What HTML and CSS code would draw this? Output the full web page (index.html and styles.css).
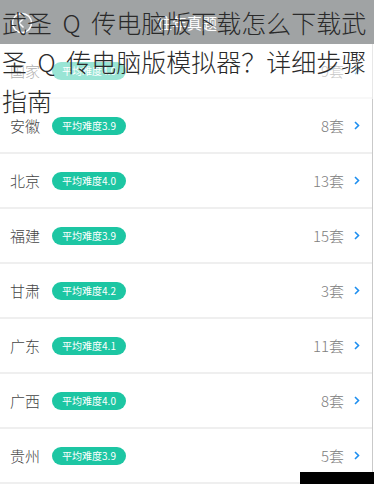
FILE: index.html
```html
<!DOCTYPE html>
<html lang="zh-CN">
<head>
<meta charset="utf-8">
<title>往年真题</title>
<link rel="stylesheet" href="styles.css">
</head>
<body>
<div class="app">
  <header class="topbar">
    <span class="back">
      <svg width="22" height="22" viewBox="0 0 22 22"><circle cx="11" cy="11" r="9.5" fill="none" stroke="#fff" stroke-width="1.5"/><path d="M12.5 6.5 L8 11 L12.5 15.5" fill="none" stroke="#fff" stroke-width="1.5"/></svg>
    </span>
    <span class="title">往年真题</span>
    <span></span>
  </header>
  <ul class="list">
    <li class="row"><span class="name">国家</span><span class="badge">平均难度4.0</span><span class="count">9套</span><svg class="chev" width="6" height="9" viewBox="0 0 6 9"><path d="M1 1 L4.5 4.5 L1 8" fill="none" stroke="#1e8ff0" stroke-width="1.6"/></svg></li>
    <li class="row"><span class="name">安徽</span><span class="badge">平均难度3.9</span><span class="count">8套</span><svg class="chev" width="6" height="9" viewBox="0 0 6 9"><path d="M1 1 L4.5 4.5 L1 8" fill="none" stroke="#1e8ff0" stroke-width="1.6"/></svg></li>
    <li class="row"><span class="name">北京</span><span class="badge">平均难度4.0</span><span class="count">13套</span><svg class="chev" width="6" height="9" viewBox="0 0 6 9"><path d="M1 1 L4.5 4.5 L1 8" fill="none" stroke="#1e8ff0" stroke-width="1.6"/></svg></li>
    <li class="row"><span class="name">福建</span><span class="badge">平均难度3.9</span><span class="count">15套</span><svg class="chev" width="6" height="9" viewBox="0 0 6 9"><path d="M1 1 L4.5 4.5 L1 8" fill="none" stroke="#1e8ff0" stroke-width="1.6"/></svg></li>
    <li class="row"><span class="name">甘肃</span><span class="badge">平均难度4.2</span><span class="count">3套</span><svg class="chev" width="6" height="9" viewBox="0 0 6 9"><path d="M1 1 L4.5 4.5 L1 8" fill="none" stroke="#1e8ff0" stroke-width="1.6"/></svg></li>
    <li class="row"><span class="name">广东</span><span class="badge">平均难度4.1</span><span class="count">11套</span><svg class="chev" width="6" height="9" viewBox="0 0 6 9"><path d="M1 1 L4.5 4.5 L1 8" fill="none" stroke="#1e8ff0" stroke-width="1.6"/></svg></li>
    <li class="row"><span class="name">广西</span><span class="badge">平均难度4.0</span><span class="count">8套</span><svg class="chev" width="6" height="9" viewBox="0 0 6 9"><path d="M1 1 L4.5 4.5 L1 8" fill="none" stroke="#1e8ff0" stroke-width="1.6"/></svg></li>
    <li class="row"><span class="name">贵州</span><span class="badge">平均难度3.9</span><span class="count">5套</span><svg class="chev" width="6" height="9" viewBox="0 0 6 9"><path d="M1 1 L4.5 4.5 L1 8" fill="none" stroke="#1e8ff0" stroke-width="1.6"/></svg></li>
  </ul>
  <div class="veil"></div>
  <h1 class="headline">武圣 Q 传电脑版下载怎么下载武圣 Q 传电脑版模拟器？详细步骤指南</h1>
  <div class="blackout"></div>
</div>
</body>
</html>
```
FILE: styles.css
```css
html, body {
  margin: 0;
  padding: 0;
  background: #fff;
}
body {
  width: 374px;
  height: 484px;
  overflow: hidden;
  font-family: "Noto Sans CJK SC", "Noto Sans", sans-serif;
}
.app {
  position: relative;
  width: 374px;
  height: 484px;
  overflow: hidden;
}
.topbar {
  height: 44px;
  background: #2d3337;
  display: grid;
  grid-template-columns: 44px 1fr 44px;
  align-items: center;
}
.back {
  display: flex;
  justify-content: center;
  align-items: center;
  padding-top: 2px;
}
.title {
  text-align: center;
  color: #fff;
  font-size: 15px;
}
.list {
  list-style: none;
  margin: 0;
  padding: 0;
  width: 372px;
  border-right: 1px solid #c9c9c9;
}
.row {
  height: 53px;
  border-bottom: 2px solid #efefef;
  display: flex;
  align-items: center;
  padding: 0 12px 0 10px;
}
.name {
  font-size: 15px;
  font-weight: 300;
  color: #444;
  width: 31px;
  margin-right: 11px;
  white-space: nowrap;
}
.badge {
  width: 74px;
  height: 18px;
  border-radius: 9px;
  background: #1dc6a3;
  color: #fff;
  font-size: 10px;
  line-height: 18px;
  text-align: center;
  white-space: nowrap;
}
.count {
  margin-left: auto;
  font-size: 15px;
  font-weight: 300;
  color: #808080;
}
.chev {
  margin-left: 10px;
  display: block;
}
.veil {
  position: absolute;
  top: 0;
  left: 0;
  right: 0;
  height: 99px;
  background: rgba(255, 255, 255, 0.55);
}
.headline {
  position: absolute;
  top: 0;
  left: 2px;
  width: 372px;
  margin: 0;
  padding-top: 3px;
  font-size: 25px;
  line-height: 39px;
  font-weight: 300;
  word-spacing: 5px;
  color: #2a2a2a;
}
.blackout {
  position: absolute;
  right: 0;
  bottom: 0;
  width: 74px;
  height: 12px;
  background: #000;
}
```
